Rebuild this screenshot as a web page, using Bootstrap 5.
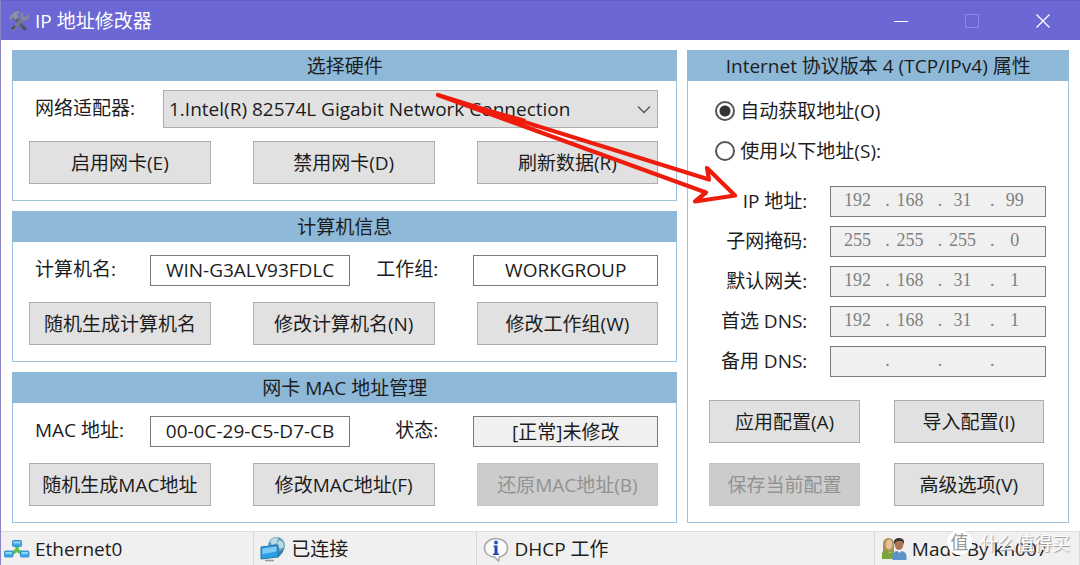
<!DOCTYPE html>
<html lang="zh-CN">
<head>
<meta charset="utf-8">
<meta name="viewport" content="width=device-width, initial-scale=1">
<title>IP 地址修改器</title>
<link href="https://cdn.jsdelivr.net/npm/bootstrap@5.3.0/dist/css/bootstrap.min.css" rel="stylesheet">
<style>
  body { font: 19px/24px "Open Sans", "Noto Sans CJK SC", sans-serif; color: #1c1c1c; background: #fff; }
  .app-window { border-left: 1px solid #8d84c4; }
  .title-bar { height: 40px; padding-right: 2px; background: #6b67d4; color: #fff; border-top: 1px solid #625ec6; }
  .title-bar h1 { font-size: 19px; line-height: 24px; font-weight: 400; }
  .title-icon { width: 22px; height: 22px; margin: 0 5px 0 7px; }
  .win-btn { width: 71px; height: 39px; border: 0; background: none; padding: 0; color: #fff; }
  .win-btn svg { width: 14px; height: 14px; display: block; margin: auto; }
  .win-btn:disabled { color: #8d88ec; }

  .work-area { display: grid; grid-template-columns: minmax(0, 666fr) minmax(0, 382fr); gap: 10px; padding: 10px 11px 8px; }
  .group-stack { display: grid; gap: 10px; }
  .group-box { border: 1px solid #9cc3db; background: #fff; }
  .group-title { margin: -1px -1px 0; height: 31px; background: #8db8d7; font-size: 19px; line-height: 32px; font-weight: 400; text-align: center; white-space: nowrap; }
  .group-body { padding: 0 18px 16px 16px; }
  .field-row { display: grid; grid-template-columns: 115px minmax(0, 200fr) 123px minmax(0, 185fr); align-items: center; height: 56px; padding: 0 0 0 6px; }
  .field-row.wide { grid-template-columns: 128px minmax(0, 1fr); }
  .field-row label { padding-bottom: 2px; white-space: nowrap; }
  .second-label { text-align: right; padding-right: 35px; }
  .button-row { display: grid; grid-template-columns: repeat(3, minmax(0, 1fr)); gap: 42px; margin-top: 4px; }

  .win-control { width: 100%; min-width: 0; height: 31px; border: 1px solid #7a7a7a; border-radius: 0; background: #fff; color: #1c1c1c; padding: 0 4px; text-align: center; }
  .win-control[readonly] { background: #f0f0f0; }
  .win-select { width: 100%; min-width: 0; height: 38px; border: 1px solid #adadad; border-radius: 0; color: #1c1c1c; padding: 0 30px 0 5px; appearance: none;
    background: #e1e1e1 url("data:image/svg+xml,%3Csvg xmlns='http://www.w3.org/2000/svg' viewBox='0 0 14 9'%3E%3Cpath d='M1 1.5l6 6 6-6' fill='none' stroke='%23555' stroke-width='1.4'/%3E%3C/svg%3E") no-repeat right 6px center / 14px 9px; }
  .win-push { height: 43px; padding: 0 2px; border: 1px solid #adadad; border-radius: 0; background: #e1e1e1; color: #1c1c1c; font-size: 19px; line-height: 24px; white-space: nowrap; }
  .win-push:hover { background: #e5f1fb; border-color: #0078d7; }
  .win-push:disabled { background: #ccc; border-color: #c4c4c4; color: #929292; opacity: 1; }

  .mode-list { padding: 10px 0 10px 10px; }
  .ip-panel { padding: 0 24px 16px 21px; }
  .mode-row { height: 40px; margin-left: -4px; }
  .mode-row input { appearance: none; width: 20px; height: 20px; margin: 0 5px 0 0; border: 2px solid #555; border-radius: 50%; background: #fff; }
  .mode-row input:checked { background: radial-gradient(circle, #333 5px, #fff 6px); }
  .address-row { display: grid; grid-template-columns: 98px minmax(0, 1fr); column-gap: 23px; align-items: center; height: 40px; margin-right: -2px; }
  .address-row > label { text-align: right; white-space: nowrap; }
  .octets { display: flex; height: 31px; border: 1px solid #7a7a7a; background: #f0f0f0; padding: 0 10px 0 6px; color: #808080; font: 18px/27px "Liberation Serif", serif; }
  .octets input { flex: 1 1 0; width: 0; min-width: 0; border: 0; padding: 0 0 2px; background: none; text-align: center; color: #808080; font: inherit; }
  .octets span { width: 12px; text-align: right; }
  .config-buttons { display: grid; grid-template-columns: repeat(2, minmax(0, 1fr)); gap: 20px 34px; margin-top: 19px; }

  .status-strip { display: grid; grid-template-columns: 253fr 223fr 397fr 205fr; height: 34px; background: #f0f0f0; border-top: 1px solid #dcdcdc; }
  .status-cell { display: flex; align-items: center; gap: 5px; padding: 0 0 0 6px; border-right: 1px solid #d8d8d8; white-space: nowrap; min-width: 0; }
  .status-cell:first-child { padding-left: 3px; }
  .status-cell:last-child { border-right: 0; }
  .status-cell svg { width: 26px; height: 26px; flex: none; }
  .site-mark { right: 10px; bottom: 10px; color: #fff; text-shadow: 1px 1px 1px #999; font-size: 18px; }
  .site-seal { width: 25px; height: 25px; border-radius: 50%; background: #fff; color: #999; line-height: 24px; text-align: center; text-shadow: none; }
  .pointer-arrow { left: 430px; top: 88px; width: 312px; height: 120px; pointer-events: none; }
</style>
</head>
<body>
<div class="app-window position-relative min-vh-100 d-flex flex-column">
  <header class="title-bar d-flex align-items-center">
    <svg class="title-icon" viewBox="0 0 22 22" aria-hidden="true">
      <path d="M6 7l11 12" stroke="#5d6075" stroke-width="4" stroke-linecap="round"/>
      <path d="M1 8l4-5q3-3 7-1L9 4l2 3-4 3-2-3-3 3z" fill="#8e919f"/>
      <path d="M5 19L15 9" stroke="#777b8d" stroke-width="3.4" stroke-linecap="round"/>
      <path d="M15 2q-4 2-2 7 2 3 6 1 3-2 2-6l-3 3-3-1z" fill="#878a9b"/>
      <path d="M4 19l3-3m8 1l2 2" stroke="#47495a" stroke-width="2"/>
    </svg>
    <h1 class="m-0 flex-grow-1">IP 地址修改器</h1>
    <button class="win-btn" type="button" aria-label="最小化"><svg viewBox="0 0 14 14"><path d="M0 7.5h14" stroke="currentColor"/></svg></button>
    <button class="win-btn" type="button" aria-label="最大化" disabled><svg viewBox="0 0 14 14"><path d="M.5.5h13v13H.5z" fill="none" stroke="currentColor"/></svg></button>
    <button class="win-btn" type="button" aria-label="关闭"><svg viewBox="0 0 14 14"><path d="M.5.5l13 13m0-13l-13 13" stroke="currentColor" stroke-width="1.3"/></svg></button>
  </header>

  <main class="work-area flex-grow-1 align-content-start">
    <div class="group-stack">
      <section class="group-box">
        <h2 class="group-title">选择硬件</h2>
        <div class="group-body">
          <div class="field-row wide">
            <label for="adapter">网络适配器:</label>
            <select class="win-select" id="adapter"><option>1.Intel(R) 82574L Gigabit Network Connection</option></select>
          </div>
          <div class="button-row">
            <button class="btn win-push" type="button">启用网卡(E)</button>
            <button class="btn win-push" type="button">禁用网卡(D)</button>
            <button class="btn win-push" type="button">刷新数据(R)</button>
          </div>
        </div>
      </section>
      <section class="group-box">
        <h2 class="group-title">计算机信息</h2>
        <div class="group-body">
          <div class="field-row">
            <label for="host">计算机名:</label>
            <input class="win-control" id="host" type="text" value="WIN-G3ALV93FDLC">
            <label class="second-label" for="workgroup">工作组:</label>
            <input class="win-control" id="workgroup" type="text" value="WORKGROUP">
          </div>
          <div class="button-row">
            <button class="btn win-push" type="button">随机生成计算机名</button>
            <button class="btn win-push" type="button">修改计算机名(N)</button>
            <button class="btn win-push" type="button">修改工作组(W)</button>
          </div>
        </div>
      </section>
      <section class="group-box">
        <h2 class="group-title">网卡 MAC 地址管理</h2>
        <div class="group-body">
          <div class="field-row">
            <label for="mac">MAC 地址:</label>
            <input class="win-control" id="mac" type="text" value="00-0C-29-C5-D7-CB">
            <label class="second-label" for="state">状态:</label>
            <input class="win-control" id="state" type="text" value="[正常]未修改" readonly>
          </div>
          <div class="button-row">
            <button class="btn win-push" type="button">随机生成MAC地址</button>
            <button class="btn win-push" type="button">修改MAC地址(F)</button>
            <button class="btn win-push" type="button" disabled>还原MAC地址(B)</button>
          </div>
        </div>
      </section>
    </div>

    <section class="group-box">
      <h2 class="group-title">Internet 协议版本 4 (TCP/IPv4) 属性</h2>
      <div class="ip-panel">
        <div class="mode-list">
          <div class="mode-row d-flex align-items-center"><input type="radio" name="mode" id="auto" checked><label for="auto">自动获取地址(O)</label></div>
          <div class="mode-row d-flex align-items-center"><input type="radio" name="mode" id="manual"><label for="manual">使用以下地址(S):</label></div>
        </div>
        <div class="address-row"><label for="ip1">IP 地址:</label>
          <div class="octets"><input id="ip1" value="192" disabled><span>.</span><input aria-label="IP 2" value="168" disabled><span>.</span><input aria-label="IP 3" value="31" disabled><span>.</span><input aria-label="IP 4" value="99" disabled></div></div>
        <div class="address-row"><label for="mask1">子网掩码:</label>
          <div class="octets"><input id="mask1" value="255" disabled><span>.</span><input aria-label="掩码 2" value="255" disabled><span>.</span><input aria-label="掩码 3" value="255" disabled><span>.</span><input aria-label="掩码 4" value="0" disabled></div></div>
        <div class="address-row"><label for="gw1">默认网关:</label>
          <div class="octets"><input id="gw1" value="192" disabled><span>.</span><input aria-label="网关 2" value="168" disabled><span>.</span><input aria-label="网关 3" value="31" disabled><span>.</span><input aria-label="网关 4" value="1" disabled></div></div>
        <div class="address-row"><label for="dnsa1">首选 DNS:</label>
          <div class="octets"><input id="dnsa1" value="192" disabled><span>.</span><input aria-label="首选 2" value="168" disabled><span>.</span><input aria-label="首选 3" value="31" disabled><span>.</span><input aria-label="首选 4" value="1" disabled></div></div>
        <div class="address-row"><label for="dnsb1">备用 DNS:</label>
          <div class="octets"><input id="dnsb1" disabled><span>.</span><input aria-label="备用 2" disabled><span>.</span><input aria-label="备用 3" disabled><span>.</span><input aria-label="备用 4" disabled></div></div>
        <div class="config-buttons">
          <button class="btn win-push" type="button">应用配置(A)</button>
          <button class="btn win-push" type="button">导入配置(I)</button>
          <button class="btn win-push" type="button" disabled>保存当前配置</button>
          <button class="btn win-push" type="button">高级选项(V)</button>
        </div>
      </div>
    </section>
  </main>

  <footer class="status-strip position-relative">
    <div class="status-cell">
      <svg viewBox="0 0 26 26" aria-hidden="true">
        <path d="M13 9v7M7 18l6-4 6 4" fill="none" stroke="#62c04f" stroke-width="3.4"/>
        <g fill="#3fa9e6" stroke="#2a83bd" stroke-width=".8"><rect x="8.500" y="4.500" width="9" height="6" rx="1"/><rect x=".5" y="15" width="8.500" height="6" rx="1"/><rect x="16.500" y="15" width="8.500" height="6" rx="1"/></g>
        <path d="M9.500 5.500h7v2h-7zM1.500 16h6.500v2H1.500zM17.500 16h6.500v2h-6.500z" fill="#8fd6fa"/>
      </svg>
      <span>Ethernet0</span>
    </div>
    <div class="status-cell">
      <svg viewBox="0 0 26 26" aria-hidden="true">
        <circle cx="16.500" cy="9.500" r="8.500" fill="#5d9cba"/>
        <path d="M10 5q5-5 8-3l-1 5-5 2zM19 4l4 2 1 5-4 2-3-5z" fill="#b9dce4"/>
        <path d="M16 16q7 0 8-5l-1 5-5 6z" fill="#377fa4"/>
        <path d="M1 11l17-2v12L1 23z" fill="#2e9fe2" stroke="#2176ad"/>
        <path d="M2.500 12.500l14-2v5L2.500 18z" fill="#7bcbf5"/>
        <path d="M5 24.500h9" stroke="#8c9ba3" stroke-width="1.600"/>
      </svg>
      <span>已连接</span>
    </div>
    <div class="status-cell">
      <svg viewBox="0 0 26 26" aria-hidden="true">
        <path d="M13 2.500c6.500 0 11.500 4 11.500 9.500 0 5-3.500 8-8 9l-1 4-4-4C5.500 20.500 1.500 17 1.500 12S6.500 2.500 13 2.500z" fill="#fafafa" stroke="#aaa" stroke-width="1.600"/>
        <circle cx="13" cy="6.500" r="1.900" fill="#2c4fc4"/>
        <path d="M10.500 9.500h4v8h1.500v1.500h-6v-1.500h1.500v-6.500h-1z" fill="#2442b5"/>
      </svg>
      <span>DHCP 工作</span>
    </div>
    <div class="status-cell">
      <svg viewBox="0 0 26 26" aria-hidden="true">
        <path d="M2 14V7q1-5 6-5 5 1 5 6v8H2z" fill="#ab9157"/>
        <ellipse cx="8" cy="8.500" rx="3.500" ry="5" fill="#e5c196"/>
        <path d="M1 23v-6q1-3 5-3l3 3 3-3 2 9z" fill="#7ba53c"/>
        <ellipse cx="18" cy="8" rx="4.500" ry="6" fill="#aa7556"/>
        <path d="M13 8q-1-6 5-6t5 6l-2-3h-5z" fill="#383430"/>
        <path d="M11.500 24v-5q1-4 5-4l2 2 2-2q5 1 5 5v4z" fill="#5d93cb"/>
      </svg>
      <span>Made By kn007</span>
    </div>
    <div class="site-mark position-absolute d-flex align-items-center gap-2"><span class="site-seal">值</span><span>什么值得买</span></div>
  </footer>

  <svg class="pointer-arrow position-absolute" viewBox="430 88 312 120" aria-hidden="true">
    <path d="M437 95L708 179.500 706 168 734 195.500 694 201.500 705 192.500z" fill="none" stroke="#ee1c0d" stroke-width="4.200" stroke-linejoin="round"/>
    <path d="M437 95L525 119 521 125z" fill="#ee1c0d"/>
  </svg>
</div>
<script src="https://cdn.jsdelivr.net/npm/bootstrap@5.3.0/dist/js/bootstrap.bundle.min.js"></script>
</body>
</html>
